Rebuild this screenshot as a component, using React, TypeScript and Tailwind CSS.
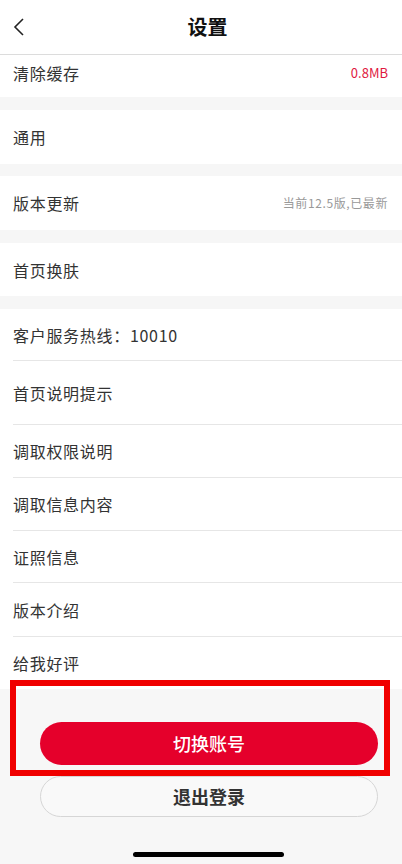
import React from "react";

const font = {
  fontFamily: '"Noto Sans CJK SC", "Noto Sans", sans-serif',
};

interface RowProps {
  label: string;
  value?: React.ReactNode;
  className?: string;
}

function Row({ label, value, className }: RowProps) {
  return (
    <div className={`flex items-center justify-between bg-white pl-[13px] pr-[14px] ${className ?? ""}`}>
      <span className="text-[16px] leading-6 tracking-[0.7px] text-[#333]">{label}</span>
      {value}
    </div>
  );
}

function ListRow({ label, h, last }: { label: string; h: string; last?: boolean }) {
  return (
    <div className={`ml-[13px] flex items-center ${h} ${last ? "" : "border-b border-[#e6e6e6]"}`}>
      <span className="text-[16px] leading-6 tracking-[0.7px] text-[#333]">{label}</span>
    </div>
  );
}

export default function App() {
  return (
    <div className="relative flex h-[864px] w-[402px] flex-col overflow-hidden bg-white" style={font}>
      {/* header */}
      <div className="flex h-[55px] items-center border-b border-[#dcdcdc] bg-white">
        <svg width="14" height="18" viewBox="0 0 14 18" className="ml-[13px] shrink-0">
          <polyline points="10,1 2,9 10,17" fill="none" stroke="#222" strokeWidth="1.6" />
        </svg>
        <div className="flex-1 text-center text-[20px] font-bold text-[#111]">设置</div>
        <div className="w-[14px]" />
      </div>

      <Row
        label="清除缓存"
        className="h-[42px] !items-start pt-[6px]"
        value={<span className="text-[13px] leading-6 text-[#e0193f]">0.8MB</span>}
      />
      <div className="h-[13px] bg-[#f6f6f6]" />
      <Row label="通用" className="h-[54px]" />
      <div className="h-[12px] bg-[#f6f6f6]" />
      <Row
        label="版本更新"
        className="h-[54px]"
        value={<span className="text-[12px] tracking-[0.6px] text-[#999]">当前12.5版,已最新</span>}
      />
      <div className="h-[13px] bg-[#f6f6f6]" />
      <Row label="首页换肤" className="h-[53px]" />
      <div className="h-[13px] bg-[#f6f6f6]" />

      <div className="bg-white">
        <ListRow label="客户服务热线：10010" h="h-[52px]" />
        <ListRow label="首页说明提示" h="h-[64px]" />
        <ListRow label="调取权限说明" h="h-[53px]" />
        <ListRow label="调取信息内容" h="h-[53px]" />
        <ListRow label="证照信息" h="h-[52px]" />
        <ListRow label="版本介绍" h="h-[54px]" />
        <ListRow label="给我好评" h="h-[52px]" last />
      </div>

      {/* bottom actions */}
      <div className="flex flex-1 flex-col items-start bg-[#f7f7f7] pt-[33px]">
        <button className="ml-[40px] h-[43px] w-[338px] rounded-full bg-[#e5002b] text-[18px] font-medium text-white">
          切换账号
        </button>
        <button className="ml-[40px] mt-[11px] h-[41px] w-[338px] rounded-full border border-[#d6d6d6] bg-[#f9f9f9] text-[18px] font-bold text-[#333]">
          退出登录
        </button>
        <div className="ml-[133px] mt-[35px] h-[5px] w-[151px] rounded-full bg-black" />
      </div>

      {/* highlight annotation */}
      <div className="pointer-events-none absolute left-[10px] top-[680px] h-[96px] w-[380px] border-[6px] border-[#f00000]" />
    </div>
  );
}
